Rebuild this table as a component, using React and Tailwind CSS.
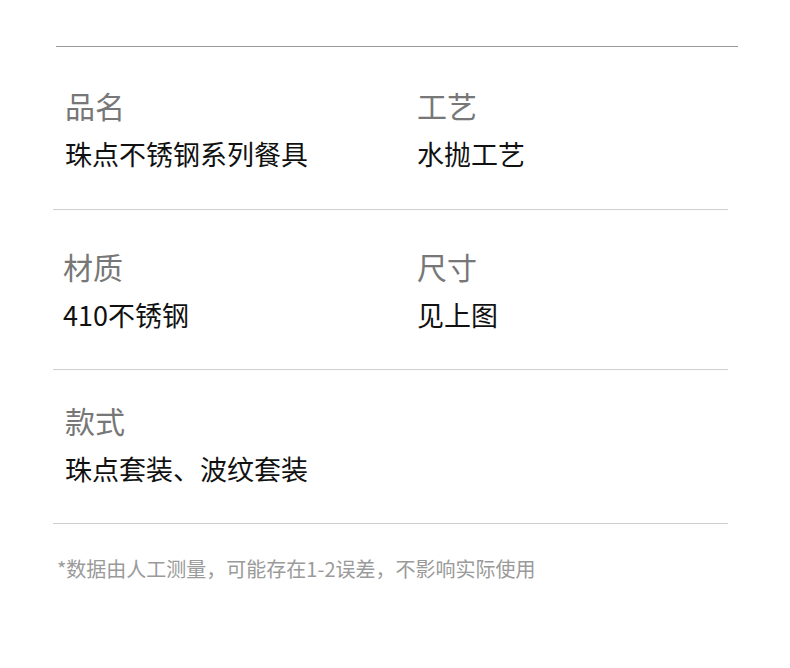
export default function App() {
  const font = { fontFamily: '"Noto Sans CJK SC", "Noto Sans", sans-serif' };
  return (
    <div className="w-[790px] h-[668px] bg-white relative" style={font}>
      <div className="h-[46px]" />
      <div className="ml-[56px] w-[682px] h-px bg-[#9a9a9a]" />
      {/* Row 1 */}
      <div className="ml-[53px] w-[675px] pt-[43px] pb-[42px] grid grid-cols-[352px_1fr] pl-[12px]">
        <div>
          <div className="text-[30px] leading-[30px] text-[#777777]">品名</div>
          <div className="mt-[20px] text-[27px] leading-[27px] text-[#111111]">珠点不锈钢系列餐具</div>
        </div>
        <div>
          <div className="text-[30px] leading-[30px] text-[#777777]">工艺</div>
          <div className="mt-[20px] text-[27px] leading-[27px] text-[#111111]">水抛工艺</div>
        </div>
      </div>
      <div className="ml-[53px] w-[675px] h-px bg-[#cfcfcf]" />
      {/* Row 2 */}
      <div className="ml-[53px] w-[675px] pt-[41px] pb-[41px] grid grid-cols-[354px_1fr] pl-[10px]">
        <div>
          <div className="text-[30px] leading-[30px] text-[#777777]">材质</div>
          <div className="mt-[20px] text-[27px] leading-[27px] text-[#111111]">410不锈钢</div>
        </div>
        <div>
          <div className="text-[30px] leading-[30px] text-[#777777]">尺寸</div>
          <div className="mt-[20px] text-[27px] leading-[27px] text-[#111111]">见上图</div>
        </div>
      </div>
      <div className="ml-[53px] w-[675px] h-px bg-[#cfcfcf]" />
      {/* Row 3 */}
      <div className="ml-[53px] w-[675px] pt-[35px] pb-[41px] pl-[12px]">
        <div className="text-[30px] leading-[30px] text-[#777777]">款式</div>
        <div className="mt-[20px] text-[27px] leading-[27px] text-[#111111]">珠点套装、波纹套装</div>
      </div>
      <div className="ml-[53px] w-[675px] h-px bg-[#cfcfcf]" />
      <div className="ml-[57px] mt-[35px] text-[20px] leading-[20px] text-[#9a9a9a]">
        *数据由人工测量，可能存在1-2误差，不影响实际使用
      </div>
    </div>
  );
}
